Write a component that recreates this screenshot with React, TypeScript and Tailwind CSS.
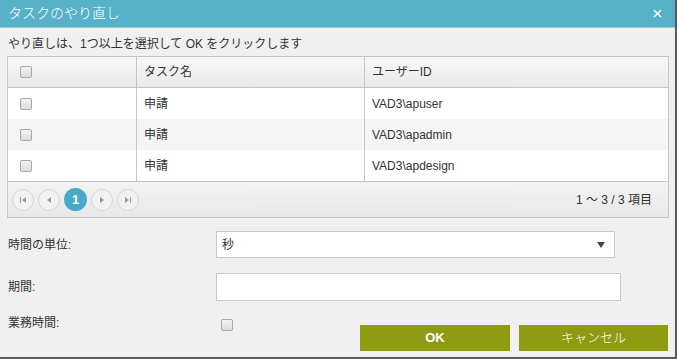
import React from 'react';

const font = { fontFamily: '"Liberation Sans", "Noto Sans CJK JP", sans-serif' };

const Check: React.FC = () => (
    <span className="inline-block w-[12px] h-[12px] rounded-[2px] border border-[#a9a9a9] bg-gradient-to-b from-[#f4f4f4] to-[#dcdcdc]" />
);

const rows = [
    { task: '申請', user: 'VAD3\\apuser' },
    { task: '申請', user: 'VAD3\\apadmin' },
    { task: '申請', user: 'VAD3\\apdesign' },
];

const PagerButton: React.FC<{ children: React.ReactNode; active?: boolean }> = ({ children, active }) =>
    active ? (
        <span className="w-[23px] h-[23px] rounded-full bg-[#4aa9c9] text-white text-[13px] font-bold flex items-center justify-center">
            {children}
        </span>
    ) : (
        <span className="w-[22px] h-[22px] rounded-full border border-[#d6d6d6] bg-[#f2f2f2] flex items-center justify-center">
            {children}
        </span>
    );

export default function App() {
    return (
        <div className="w-[677px] h-[359px] bg-[#5a5a5a] flex" style={font}>
            <div className="w-[675px] h-[357px] bg-[#f0f0f0] flex flex-col text-[12px] text-[#333]">
                {/* Title bar */}
                <div className="h-[28px] bg-[#56b1c9] flex items-center justify-between pl-[8px] pr-[13px] text-white border-b border-[#9fcbd8]">
                    <span className="text-[14px] font-light">タスクのやり直し</span>
                    <svg width="9" height="9" viewBox="0 0 10 10">
                        <path d="M1 1 L9 9 M9 1 L1 9" stroke="white" strokeWidth="1.6" />
                    </svg>
                </div>

                <div className="px-[8px] pt-[7px] h-[28px]">やり直しは、1つ以上を選択して OK をクリックします</div>

                {/* Grid */}
                <div className="ml-[7px] w-[662px] border border-[#c5c5c5] bg-white">
                    <div className="flex h-[31px] bg-gradient-to-b from-[#f8f8f8] to-[#e9e9e9] border-b border-[#c5c5c5]">
                        <div className="w-[129px] border-r border-[#c5c5c5] flex items-center pl-[12px]">
                            <Check />
                        </div>
                        <div className="w-[228px] border-r border-[#c5c5c5] flex items-center pl-[7px]">タスク名</div>
                        <div className="flex-1 flex items-center pl-[7px]">ユーザーID</div>
                    </div>
                    {rows.map((r, i) => (
                        <div key={i} className={`flex h-[31px] ${i === 1 ? 'bg-[#f5f5f5]' : 'bg-white'}`}>
                            <div className="w-[129px] border-r border-[#c5c5c5] flex items-center pl-[12px]">
                                <Check />
                            </div>
                            <div className="w-[228px] border-r border-[#c5c5c5] flex items-center pl-[7px]">{r.task}</div>
                            <div className="flex-1 flex items-center pl-[7px]">{r.user}</div>
                        </div>
                    ))}
                    <div className="flex h-[36px] items-center justify-between bg-gradient-to-b from-[#f3f3f3] to-[#e8e8e8] border-t border-[#c5c5c5] pl-[4px] pr-[16px]">
                        <div className="flex items-center gap-[4px]">
                            <PagerButton>
                                <svg width="8" height="8" viewBox="0 0 8 8"><path d="M1 1h1v6H1z M7 1v6L3 4z" fill="#999" /></svg>
                            </PagerButton>
                            <PagerButton>
                                <svg width="8" height="8" viewBox="0 0 8 8"><path d="M6 1v6L2 4z" fill="#999" /></svg>
                            </PagerButton>
                            <PagerButton active>1</PagerButton>
                            <PagerButton>
                                <svg width="8" height="8" viewBox="0 0 8 8"><path d="M2 1v6l4-3z" fill="#999" /></svg>
                            </PagerButton>
                            <PagerButton>
                                <svg width="8" height="8" viewBox="0 0 8 8"><path d="M1 1v6l4-3z M6 1h1v6H6z" fill="#999" /></svg>
                            </PagerButton>
                        </div>
                        <span>1 ～ 3 / 3 項目</span>
                    </div>
                </div>

                {/* Form */}
                <div className="flex items-center mt-[13px] h-[27px]">
                    <span className="w-[216px] pl-[8px]">時間の単位:</span>
                    <div className="w-[399px] h-[27px] bg-white border border-[#c8c8c8] flex items-center justify-between pl-[5px] pr-[9px]">
                        <span>秒</span>
                        <svg width="8" height="6" viewBox="0 0 8 6"><path d="M0 0h8L4 6z" fill="#444" /></svg>
                    </div>
                </div>
                <div className="flex items-center mt-[15px] h-[28px]">
                    <span className="w-[216px] pl-[8px]">期間:</span>
                    <div className="w-[405px] h-[28px] bg-white border border-[#c8c8c8]" />
                </div>
                <div className="flex items-start mt-[12px]">
                    <span className="w-[221px] pl-[8px] pt-[1px]">業務時間:</span>
                    <div className="pt-[5px]">
                        <Check />
                    </div>
                    <div className="flex-1 flex justify-end gap-[9px] pr-[7px] pt-[12px]">
                        <button className="w-[150px] h-[26px] bg-[#8f9a13] text-white text-[13px] font-bold">OK</button>
                        <button className="w-[149px] h-[26px] bg-[#8f9a13] text-white text-[13px] font-light">キャンセル</button>
                    </div>
                </div>
            </div>
        </div>
    );
}
